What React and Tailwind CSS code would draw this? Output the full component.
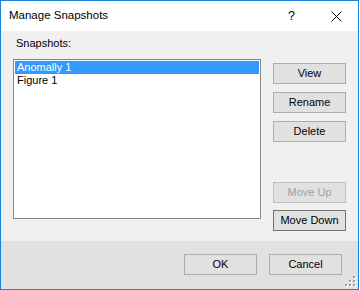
import React from 'react'

const font = { fontFamily: '"Liberation Sans", Arial, sans-serif' }

const DlgButton = ({ children, disabled, focused, className = '' }) => (
  <button
    disabled={disabled}
    className={
      'flex h-[21px] w-[73px] items-center justify-center border bg-[#e1e1e1] text-[11px] leading-[13px] ' +
      (disabled
        ? 'border-[#bfbfbf] bg-[#cccccc] text-[#a0a0a0] '
        : focused
          ? 'border-[#707070] text-black '
          : 'border-[#adadad] text-black ') +
      className
    }
  >
    {children}
  </button>
)

const SizeGrip = () => (
  <svg width="12" height="12" viewBox="0 0 12 12" className="absolute bottom-[1px] right-[1px]">
    {[
      [8, 0],
      [4, 4],
      [8, 4],
      [0, 8],
      [4, 8],
      [8, 8],
    ].map(([x, y], i) => (
      <g key={i}>
        <rect x={x + 1} y={y + 1} width="2" height="2" fill="#ffffff" />
        <rect x={x} y={y} width="2" height="2" fill="#a0a0a0" />
      </g>
    ))}
  </svg>
)

export default function App() {
  const items = ['Anomally 1', 'Figure 1']

  return (
    <div className="h-[290px] w-[360px] bg-white" style={font}>
      <div className="flex h-[290px] w-[359px] flex-col border border-[#1883d7]">
        {/* Title bar */}
        <div className="flex h-[30px] items-center bg-white">
          <span className="ml-[8px] text-[11.5px] text-black">Manage Snapshots</span>
          <span className="ml-auto mr-[36px] text-[12.5px] text-black">?</span>
          <svg width="11" height="11" viewBox="0 0 11 11" className="mr-[16px]">
            <path d="M0.5 0.5 L10.5 10.5 M10.5 0.5 L0.5 10.5" stroke="#000" strokeWidth="1" />
          </svg>
        </div>

        {/* Body */}
        <div className="flex h-[210px] flex-col bg-[#f0f0f0] pl-[12px]">
          <div className="ml-[3px] mt-[6px] text-[11px] leading-[13px] text-black">Snapshots:</div>
          <div className="mt-[9px] flex">
            <div className="h-[160px] w-[248px] border border-[#828790] bg-white p-[1px]">
              {items.map((item, i) => (
                <div
                  key={item}
                  className={
                    'h-[13px] pl-[2px] text-[11px] leading-[13px] ' +
                    (i === 0 ? 'bg-[#3399ff] text-white' : 'text-black')
                  }
                >
                  {item}
                </div>
              ))}
            </div>
            <div className="ml-[12px] mt-[4px] flex flex-col">
              <DlgButton>View</DlgButton>
              <DlgButton className="mt-[8px]">Rename</DlgButton>
              <DlgButton className="mt-[8px]">Delete</DlgButton>
              <DlgButton disabled className="mt-[40px]">
                Move Up
              </DlgButton>
              <DlgButton focused className="mt-[7px]">
                Move Down
              </DlgButton>
            </div>
          </div>
        </div>

        {/* Footer */}
        <div className="relative flex flex-1 justify-end bg-[#e1e1e1] pr-[16px] pt-[13px]">
          <DlgButton>OK</DlgButton>
          <DlgButton className="ml-[12px]">Cancel</DlgButton>
          <SizeGrip />
        </div>
      </div>
    </div>
  )
}
